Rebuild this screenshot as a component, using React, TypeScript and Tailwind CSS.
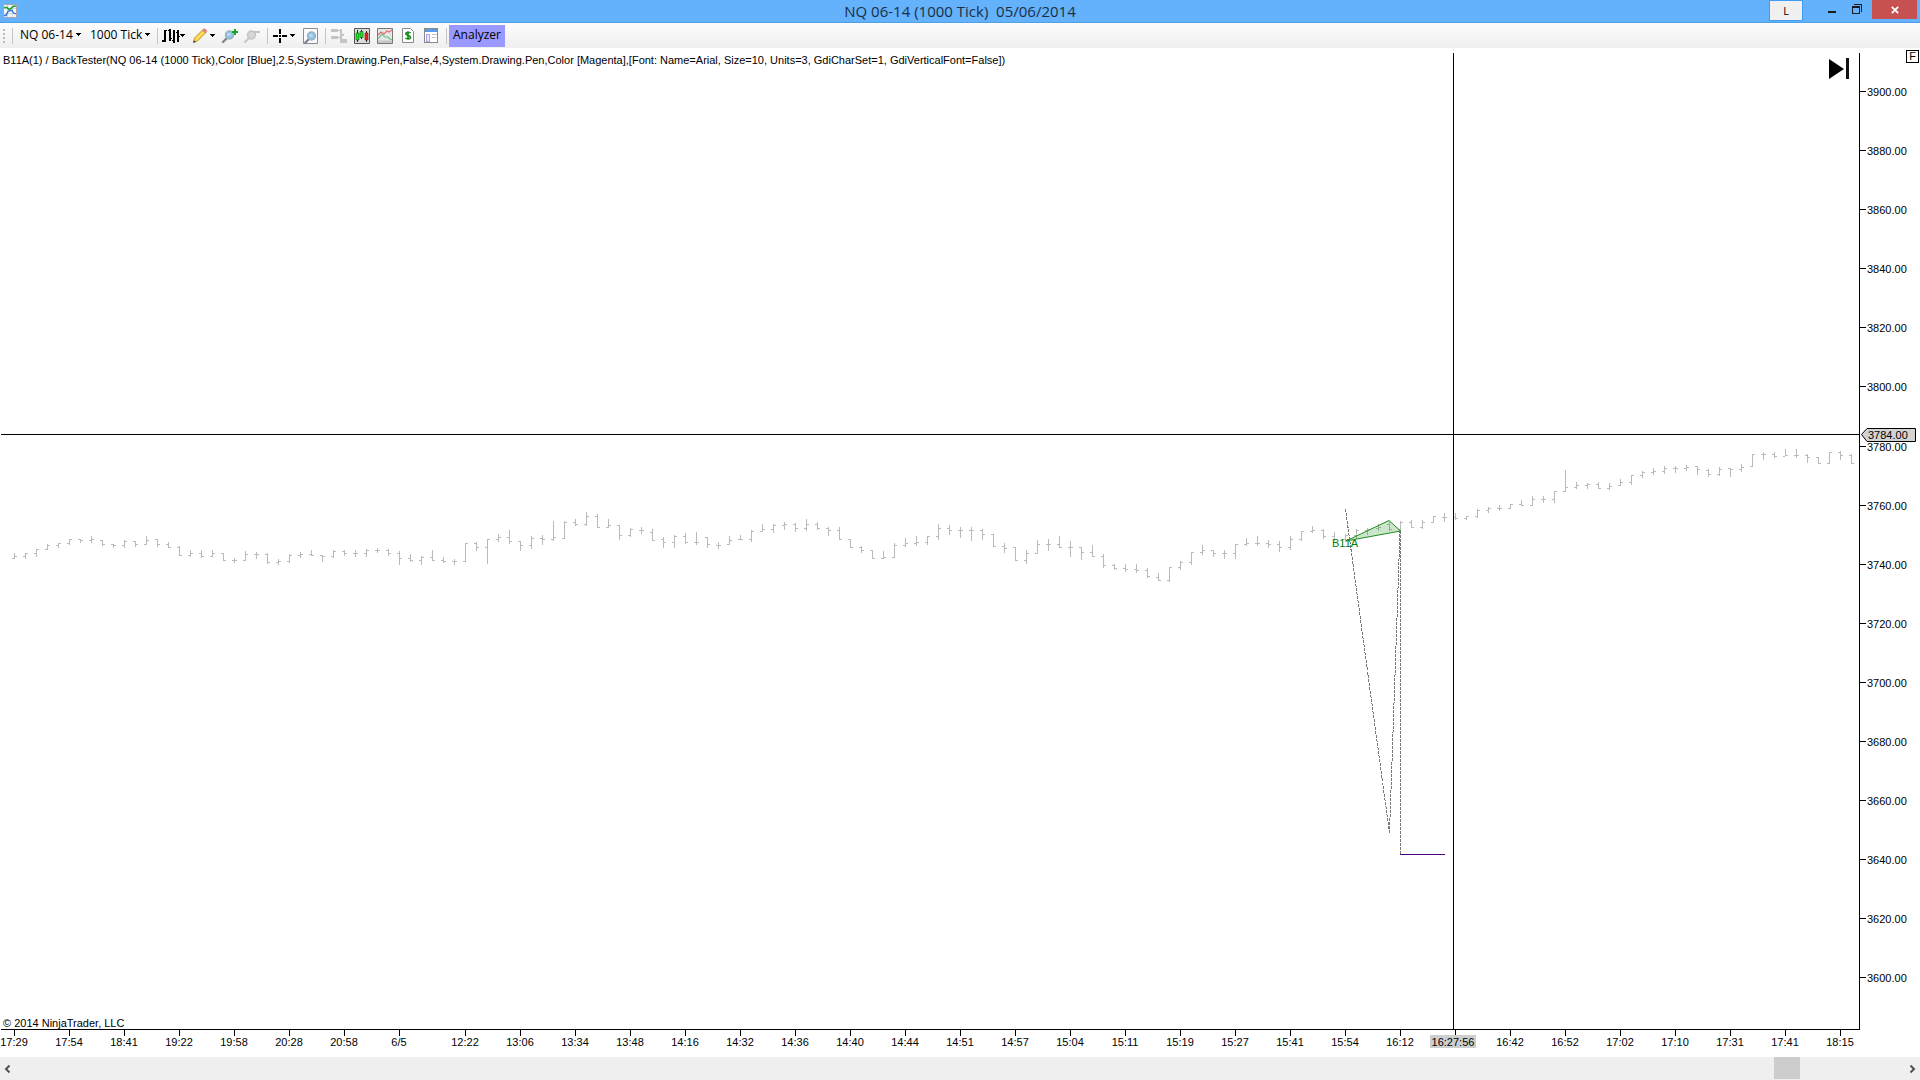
import type { ReactNode } from "react";

// [open, high, low, close] as pixel rows inside the price panel
const BARS: [number, number, number, number][] = [
  [118, 113, 118, 116], [116, 113, 118, 113], [113, 109, 116, 109], [109, 104, 109, 105],
  [105, 103, 107, 103], [103, 99, 104, 99], [99, 99, 102, 100], [100, 96, 102, 99],
  [100, 100, 105, 104], [104, 104, 107, 105], [105, 100, 107, 101], [101, 101, 106, 104],
  [104, 96, 104, 100], [99, 99, 106, 104], [104, 102, 107, 107], [107, 106, 115, 115],
  [115, 110, 116, 113], [113, 110, 117, 116], [116, 110, 116, 113], [113, 113, 120, 120],
  [120, 118, 122, 120], [120, 111, 120, 114], [114, 112, 118, 114], [114, 113, 123, 122],
  [122, 119, 124, 121], [121, 114, 122, 115], [115, 112, 117, 114], [114, 110, 115, 115],
  [115, 115, 121, 116], [116, 110, 117, 111], [111, 110, 115, 113], [113, 110, 116, 113],
  [113, 109, 116, 110], [110, 108, 112, 110], [110, 109, 115, 113], [113, 111, 124, 118],
  [118, 114, 121, 120], [120, 116, 124, 117], [117, 110, 120, 120], [120, 117, 122, 121],
  [121, 119, 124, 121], [121, 103, 121, 103], [103, 102, 110, 107], [107, 99, 123, 99],
  [99, 94, 101, 97], [97, 90, 103, 101], [101, 101, 110, 105], [105, 96, 108, 98],
  [98, 95, 104, 99], [99, 81, 100, 97], [98, 81, 98, 82], [82, 79, 85, 84],
  [84, 72, 85, 76], [76, 74, 87, 87], [87, 79, 87, 85], [85, 85, 99, 95],
  [95, 88, 96, 89], [90, 87, 93, 90], [92, 89, 100, 100], [99, 97, 107, 102],
  [102, 95, 107, 96], [96, 93, 103, 102], [102, 92, 104, 102], [97, 97, 107, 104],
  [105, 102, 108, 105], [104, 96, 104, 100], [99, 95, 99, 99], [99, 90, 101, 91],
  [91, 84, 91, 89], [89, 84, 92, 85], [85, 82, 89, 84], [84, 83, 91, 88],
  [88, 79, 90, 84], [84, 82, 89, 88], [88, 87, 95, 90], [90, 87, 99, 99],
  [99, 99, 107, 107], [107, 106, 112, 110], [110, 110, 118, 118], [118, 111, 118, 117],
  [117, 103, 117, 105], [105, 98, 106, 103], [103, 96, 105, 102], [102, 96, 104, 96],
  [96, 84, 99, 88], [88, 85, 94, 90], [90, 87, 97, 90], [90, 87, 100, 90],
  [90, 89, 99, 94], [94, 94, 106, 106], [106, 103, 112, 108], [107, 107, 120, 120],
  [120, 110, 123, 113], [113, 100, 113, 104], [104, 99, 110, 104], [104, 96, 107, 107],
  [107, 101, 116, 107], [107, 107, 119, 112], [112, 105, 116, 116], [116, 114, 127, 125],
  [125, 124, 129, 128], [128, 124, 131, 129], [129, 124, 132, 130], [130, 128, 137, 136],
  [137, 133, 140, 140], [140, 127, 141, 127], [127, 121, 129, 122], [122, 112, 124, 112],
  [112, 105, 114, 110], [110, 110, 116, 113], [113, 110, 118, 113], [113, 104, 118, 104],
  [104, 98, 105, 103], [103, 96, 105, 103], [103, 100, 107, 104], [104, 101, 111, 107],
  [107, 96, 109, 99], [99, 91, 100, 91], [91, 86, 92, 90], [90, 89, 98, 96],
  [96, 92, 100, 99], [99, 94, 101, 95], [95, 89, 98, 90], [90, 88, 94, 89],
  [88, 84, 90, 87], [84, 82, 90, 89], [89, 81, 90, 82], [82, 80, 87, 87],
  [87, 80, 88, 82], [82, 76, 82, 76], [77, 73, 81, 77], [77, 73, 79, 78],
  [78, 76, 79, 76], [76, 69, 77, 70], [70, 67, 72, 68], [68, 65, 70, 68],
  [68, 64, 68, 64], [64, 60, 65, 65], [65, 56, 65, 59], [59, 56, 62, 59],
  [59, 51, 62, 51], [51, 30, 51, 47], [47, 42, 48, 45], [45, 43, 48, 44],
  [44, 42, 48, 48], [48, 43, 49, 46], [45, 39, 45, 42], [42, 35, 44, 35],
  [35, 31, 37, 32], [32, 28, 34, 31], [31, 26, 33, 28], [28, 26, 32, 28],
  [28, 25, 30, 27], [26, 26, 34, 29], [30, 29, 36, 34], [34, 27, 35, 29],
  [28, 28, 36, 29], [29, 24, 31, 27], [26, 14, 26, 14], [14, 12, 19, 14],
  [14, 12, 17, 16], [16, 9, 15, 15], [15, 9, 17, 15], [15, 14, 22, 17],
  [17, 17, 23, 23], [23, 12, 23, 12], [12, 11, 19, 15], [15, 14, 23, 23],
];

const EARLY_TIMES = ["17:29", "17:54", "18:41", "19:22", "19:58", "20:28", "20:58", "6/5"];
const LATE_TIMES = [
  "12:22", "13:06", "13:34", "13:48", "14:16", "14:32", "14:36", "14:40", "14:44",
  "14:51", "14:57", "15:04", "15:11", "15:19", "15:27", "15:41", "15:54", "16:12",
  "", "16:42", "16:52", "17:02", "17:10", "17:31", "17:41", "18:15",
];
const TIMES = [
  ...EARLY_TIMES.map((label, i) => ({ label, x: 14 + i * 55 })),
  ...LATE_TIMES.map((label, i) => ({ label, x: 465 + i * 55 })),
];

const PRICES = Array.from({ length: 16 }, (_, i) => 3900 - i * 20);
const priceY = (price: number) => Math.floor(43.6 + ((3900 - price) * 886) / 300);

const BAR_TOP = 392;
const barPath = BARS.map(([o, h, l, c], i) => {
  const x = 14 + i * 11;
  return `M${x} ${BAR_TOP + h}h1v${l - h + 1}h-1zM${x - 2} ${BAR_TOP + o}h2v1h-2zM${x + 1} ${BAR_TOP + c}h2v1h-2z`;
}).join("");

function Chart() {
  return (
    <svg viewBox="0 0 1920 1009" className="block h-full w-full font-['Liberation_Sans',Arial,sans-serif] text-[11px]">
      <path d={barPath} fill="#bababa" shapeRendering="crispEdges" />

      {/* pattern projection */}
      <g fill="none" stroke="#7a7a7a" strokeDasharray="3 1" shapeRendering="crispEdges">
        <path d="M1345.5 461L1389.5 785" />
        <path d="M1389.5 785L1400 483" />
        <path d="M1400.5 483V806" />
      </g>
      <path d="M1400 806.5H1445" stroke="#4b0082" shapeRendering="crispEdges" />
      <text x="1332" y="499" fill="#008000">B11A</text>
      <path d="M1346 493L1389 472.5L1400.5 483Z" fill="#008000" fillOpacity="0.2" stroke="#228b22" />

      {/* axes */}
      <g shapeRendering="crispEdges">
        <path d="M1859.5 5V982M1 981.5H1860" stroke="#000" />
        {PRICES.map((p) => (
          <path key={p} d={`M1860 ${priceY(p) + 0.5}h6`} stroke="#000" />
        ))}
        {TIMES.map((t) => (
          <path key={t.x} d={`M${t.x + 0.5} 982v6`} stroke="#000" />
        ))}
      </g>
      {PRICES.map((p) => (
        <text key={p} x="1867" y={priceY(p) + 5}>{p.toFixed(2)}</text>
      ))}
      {TIMES.map((t) => (
        <text key={t.x} x={t.x} y="998" textAnchor="middle">{t.label}</text>
      ))}

      {/* crosshair */}
      <path d="M1 386.5H1860M1453.5 5V981" stroke="#000" shapeRendering="crispEdges" />
      <path d="M1861.5 386.5L1867 380.5H1915.5V393.5H1867Z" fill="#d3d3d3" stroke="#000" />
      <text x="1868" y="391">3784.00</text>
      <path d="M1430 987h46v13h-46z" fill="#cecece" />
      <text x="1453" y="998" textAnchor="middle">16:27:56</text>
    </svg>
  );
}

function Separator() {
  return <div className="h-4 w-px shrink-0 bg-[#c4c4c4]" />;
}

function Caret() {
  return (
    <svg width="5" height="3" viewBox="0 0 5 3" className="shrink-0" shapeRendering="crispEdges">
      <path d="M0 0h5v1H4v1H3v1H2V2H1V1H0z" fill="#000" />
    </svg>
  );
}

function Tool({ label, children, className = "" }: { label: string; children: ReactNode; className?: string }) {
  return (
    <button aria-label={label} className={`flex h-5 shrink-0 items-center ${className}`}>
      {children}
    </button>
  );
}

function Lens({ muted = false }: { muted?: boolean }) {
  return (
    <>
      <path d="M2 14l4-4" stroke={muted ? "#c9c9c9" : "#7d8791"} strokeWidth="2.4" strokeLinecap="round" />
      <circle cx="8.5" cy="7" r="4" fill={muted ? "#d6d6d6" : "#8fc3ea"} stroke={muted ? "#c4c4c4" : "#9fb0bd"} strokeWidth="1.4" />
      {!muted && <circle cx="8" cy="6.5" r="1.8" fill="#b9dcf5" />}
    </>
  );
}

function TitleBar() {
  return (
    <header className="grid h-[23px] shrink-0 grid-cols-[1fr_auto_1fr] border-b border-[#4f9fe4] bg-[#64b1fc]">
      <div className="pt-1 pl-[3px]">
        <svg width="14" height="14" viewBox="0 0 14 14">
          <path d="M.5 .5h13v13H.5z" fill="#f4f7fa" stroke="#a6a6b4" />
          <path d="M4.500 1v12M9.500 1v12M1 4.500h12M1 9.500h12" stroke="#cdd2dc" />
          <path d="M1 3.500h3l2 2 2-1 2-2 3-.5" fill="none" stroke="#23a32a" strokeWidth="1.6" />
          <path d="M1 11.500h2l2-4 2-1 2 0 1.500 2.500 2.500 1" fill="none" stroke="#2f6fce" strokeWidth="1.3" />
        </svg>
      </div>
      <h1 className="font-['Open_Sans','Noto_Sans',sans-serif] text-[15px] leading-[23px] whitespace-pre text-[#1d2f42]">
        NQ 06-14 (1000 Tick)  05/06/2014
      </h1>
      <div className="flex items-start justify-end pr-[3px]">
        <button className="mr-[17px] h-[21px] w-[34px] border border-[#3f9dfa] bg-[#f0f0f0] font-['Open_Sans',sans-serif] text-[11px] leading-[18px] text-black">
          L
        </button>
        <button aria-label="Minimize" className="flex h-5 w-6 justify-center pt-[11px]">
          <span className="h-0.5 w-2 bg-[#1c1c1c]" />
        </button>
        <button aria-label="Restore" className="mr-[3px] flex h-5 w-[25px] justify-center pt-1">
          <svg width="10" height="10" viewBox="0 0 10 10" shapeRendering="crispEdges">
            <path d="M2 0h8v8H9V1H2z" fill="#1c1c1c" />
            <path d="M0 2h8v8H0zM1 4v5h6V4z" fill="#1c1c1c" fillRule="evenodd" />
          </svg>
        </button>
        <button aria-label="Close" className="flex h-[19px] w-[45px] items-center justify-center bg-[#c75050]">
          <svg width="8" height="8" viewBox="0 0 8 8">
            <path d="M.8 .8L7.200 7.200M7.200 .8L.8 7.200" stroke="#fff" strokeWidth="1.8" />
          </svg>
        </button>
      </div>
    </header>
  );
}

function Toolbar() {
  return (
    <nav className="flex h-[25px] shrink-0 items-center bg-linear-to-b from-[#fcfcfc] to-[#efefef] font-['Open_Sans','Noto_Sans',sans-serif] text-xs leading-4 text-black">
      <svg width="12" height="16" viewBox="0 0 12 16" className="shrink-0" shapeRendering="crispEdges">
        <path d="M3 1h2v2H3zM3 5h2v2H3zM3 9h2v2H3zM3 13h2v2H3z" fill="#bcbcbc" />
      </svg>
      <Separator />
      <button className="flex w-[68px] shrink-0 items-center justify-between pb-0.5 pl-[7px] text-left whitespace-nowrap">
        NQ 06-14 <Caret />
      </button>
      <button className="flex w-[69px] shrink-0 items-center justify-between pb-0.5 pl-[9px] text-left whitespace-nowrap">
        1000 Tick <Caret />
      </button>
      <div className="w-[7px] shrink-0" />
      <Separator />
      <Tool label="Chart style" className="w-[30px] pl-1">
        <svg width="18" height="16" viewBox="0 0 18 16" className="shrink-0" shapeRendering="crispEdges">
          <path d="M2 2h2v12H2zM0 12h2v2H0zM4 2h1v1H4z" fill="#000" />
          <path d="M7 1h2v12H7zM6 2h1v1H6zM9 10h1v1H9z" fill="#000" />
          <path d="M11 2h2v13h-2zM10 12h1v1h-1z" fill="#000" />
          <path d="M15 2h2v12h-2zM14 4h1v1h-1zM17 8h1v1h-1z" fill="#000" />
        </svg>
        <Caret />
      </Tool>
      <Tool label="Drawing tools" className="w-[27px] justify-between pl-1">
        <svg width="16" height="16" viewBox="0 0 16 16" className="shrink-0">
          <path d="M1.500 14.500l1-4.500 8-8 3 3-8 8z" fill="#f7d23e" stroke="#b58a1c" strokeWidth=".8" />
          <path d="M10.500 2l1-1c1-.8 4 1.500 3 2.800L13.500 5z" fill="#f08a8a" stroke="#b46a5a" strokeWidth=".6" />
          <path d="M1.300 14.700l.6-2.400 1.800 1.700z" fill="#333" />
          <path d="M4 11.500l7.500-7.500" stroke="#fff0a0" strokeWidth="1" />
        </svg>
        <Caret />
      </Tool>
      <Tool label="Zoom in" className="w-[26px] pl-1.5">
        <svg width="18" height="16" viewBox="0 0 18 16" className="shrink-0">
          <Lens />
          <path d="M11 4h6M14 1v6" stroke="#15a52c" strokeWidth="2" />
        </svg>
      </Tool>
      <Tool label="Zoom out" className="w-[26px] pl-0.5">
        <svg width="18" height="16" viewBox="0 0 18 16" className="shrink-0">
          <Lens muted />
          <path d="M11 4h6" stroke="#c4c4c4" strokeWidth="2" />
        </svg>
      </Tool>
      <Separator />
      <Tool label="Crosshair" className="w-[27px] justify-between pl-[5px]">
        <svg width="14" height="14" viewBox="0 0 14 14" className="shrink-0" shapeRendering="crispEdges">
          <path d="M0 6h5v2H0zM9 6h5v2H9zM6 0h2v5H6zM6 9h2v5H6zM6 6h2v2H6z" fill="#000" />
        </svg>
        <Caret />
      </Tool>
      <Tool label="Data box" className="w-[30px] pl-2">
        <svg width="15" height="16" viewBox="0 0 15 16" className="shrink-0">
          <path d="M.5 .5h14v15H.5z" fill="#fbfbfb" stroke="#8c8c8c" />
          <g transform="translate(0 1)">
            <Lens />
          </g>
        </svg>
      </Tool>
      <Separator />
      <Tool label="Chart trader" className="w-[23px] pl-[5px]">
        <svg width="16" height="16" viewBox="0 0 16 16" className="shrink-0" shapeRendering="crispEdges">
          <path d="M0 1h7v3H0zM0 8h7v3H0zM7 2h3v1H7zM7 9h3v1H7zM9 1h2v14H9zM11 6h2v2h-2zM11 11h5v4h-5z" fill="#c4c4c4" />
        </svg>
      </Tool>
      <Tool label="Data series" className="w-[23px] pl-[5px]">
        <svg width="16" height="16" viewBox="0 0 16 16" className="shrink-0">
          <path d="M.5 .5h15v15H.5z" fill="#dcdcdc" stroke="#555" />
          <path d="M3.500 2v12M7.500 2v9M12.500 3v11" stroke="#222" />
          <path d="M2 5h3v7H2zM6 3.500h3v6H6z" fill="#22e02a" stroke="#105c14" strokeWidth=".6" />
          <path d="M11 5h3v7h-3z" fill="#f02424" stroke="#701010" strokeWidth=".6" />
        </svg>
      </Tool>
      <Tool label="Indicators" className="w-[23px] pl-[5px]">
        <svg width="16" height="16" viewBox="0 0 16 16" className="shrink-0">
          <path d="M.5 .5h15v15H.5z" fill="#e6e6e6" stroke="#777" />
          <path d="M1 7l3-3 3 2 3-3 2 1 3-2" fill="none" stroke="#e47070" strokeWidth="1.2" />
          <path d="M1 11l4-5 3 3 3 0 2 2 2 1" fill="none" stroke="#6bbf86" strokeWidth="1.2" />
          <path d="M1 12.500h14V15H1z" fill="#c6c6c6" />
        </svg>
      </Tool>
      <Tool label="Strategies" className="w-[23px] pl-[7px]">
        <svg width="12" height="15" viewBox="0 0 12 15" className="shrink-0">
          <path d="M.5 .5h8l3 3v11H.5z" fill="#fff" stroke="#8a8a8a" />
          <path d="M8.500 5C7.500 4 3.700 4 3.700 5.800s4.800 1.400 4.800 3.400-4 1.900-5 .8M6 3.200v8.600" fill="none" stroke="#178a17" strokeWidth="1.6" />
        </svg>
      </Tool>
      <Tool label="Properties" className="w-[28px] pl-1.5">
        <svg width="14" height="15" viewBox="0 0 14 15" className="shrink-0" shapeRendering="crispEdges">
          <path d="M.5 .5h13v14H.5z" fill="#fff" stroke="#8a8a8a" />
          <path d="M1 1h12v3H1z" fill="#5b9be8" />
          <path d="M2 6h4v8H2z" fill="#aca8f4" />
          <path d="M3 7h2v6H3z" fill="#e7e5ff" />
          <path d="M8 6h5v1H8zM8 9h4v1H8z" fill="#c3c3c3" />
        </svg>
      </Tool>
      <Separator />
      <button className="ml-0.5 h-[22px] w-14 shrink-0 bg-[#9999ff] pb-0.5 text-center leading-5">Analyzer</button>
    </nav>
  );
}

export default function App() {
  return (
    <div className="flex h-screen flex-col overflow-hidden bg-white">
      <TitleBar />
      <Toolbar />

      <main className="relative min-h-0 flex-1 font-['Liberation_Sans',Arial,sans-serif] text-[11px] leading-4 text-black">
        <Chart />
        <p className="absolute top-1 left-[3px] whitespace-nowrap">
          B11A(1) / BackTester(NQ 06-14 (1000 Tick),Color [Blue],2.5,System.Drawing.Pen,False,4,System.Drawing.Pen,Color
          {" "}[Magenta],[Font: Name=Arial, Size=10, Units=3, GdiCharSet=1, GdiVerticalFont=False])
        </p>
        <p className="absolute bottom-[26px] left-[3px] whitespace-nowrap">© 2014 NinjaTrader, LLC</p>
        <button aria-label="Go to last bar" className="absolute top-2.5 right-[69px]">
          <svg width="22" height="22" viewBox="0 0 22 22">
            <path d="M0 1l15 10-15 10z" fill="#000" />
            <path d="M17 0h3v21h-3z" fill="#111" />
          </svg>
        </button>
        <button className="absolute top-0.5 right-px h-[13px] w-[13px] border border-black bg-white text-center leading-[11px]">
          F
        </button>
      </main>

      <footer className="flex h-[23px] shrink-0 items-center justify-between bg-[#efefef] pr-1 pl-1">
        <button aria-label="Scroll left">
          <svg width="7" height="8" viewBox="0 0 7 8">
            <path d="M5.500 .5L2 4l3.500 3.500" fill="none" stroke="#505050" strokeWidth="2" />
          </svg>
        </button>
        <div className="flex h-full flex-1 justify-end pr-[109px]">
          <div className="h-[22px] w-[26px] bg-[#cdcdcd]" />
        </div>
        <button aria-label="Scroll right">
          <svg width="7" height="8" viewBox="0 0 7 8">
            <path d="M1.500 .5L5 4 1.500 7.500" fill="none" stroke="#505050" strokeWidth="2" />
          </svg>
        </button>
      </footer>
    </div>
  );
}
